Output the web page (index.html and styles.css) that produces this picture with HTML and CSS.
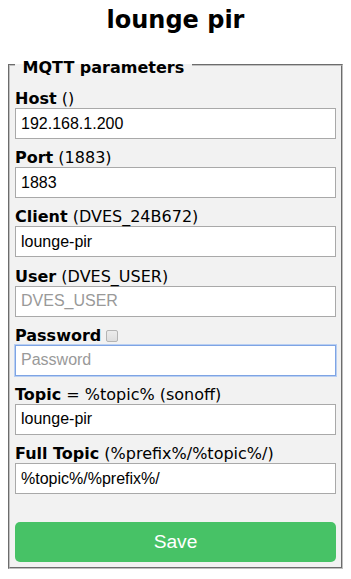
FILE: index.html
```html
<!DOCTYPE html>
<html lang="en">
<head>
    <meta charset="UTF-8">
    <meta name="viewport" content="width=device-width, initial-scale=1.0">
    <title>lounge pir - Configure MQTT</title>
    <link rel="stylesheet" href="styles.css">
</head>
<body>
    <div class="page">
        <h2 class="title">lounge pir</h2>

        <fieldset class="panel">
            <legend><b>&nbsp;MQTT parameters&nbsp;</b></legend>
            <form class="form" method="get" action="sv">
                <!-- Host -->
                <div class="field">
                    <div class="label"><b>Host</b> ()</div>
                    <input class="text" id="mh" name="mh" value="192.168.1.200">
                </div>

                <!-- Port -->
                <div class="field">
                    <div class="label"><b>Port</b> (1883)</div>
                    <input class="text" id="ml" name="ml" value="1883">
                </div>

                <!-- Client -->
                <div class="field">
                    <div class="label"><b>Client</b> (DVES_24B672)</div>
                    <input class="text" id="mc" name="mc" value="lounge-pir">
                </div>

                <!-- User -->
                <div class="field">
                    <div class="label"><b>User</b> (DVES_USER)</div>
                    <input class="text" id="mu" name="mu" placeholder="DVES_USER">
                </div>

                <!-- Password -->
                <div class="field">
                    <div class="label"><b>Password</b> <input type="checkbox" class="show-pw"></div>
                    <input class="text is-focus" id="mp" name="mp" type="password" placeholder="Password">
                </div>

                <!-- Topic -->
                <div class="field">
                    <div class="label"><b>Topic</b> = %topic% (sonoff)</div>
                    <input class="text" id="mt" name="mt" value="lounge-pir">
                </div>

                <!-- Full Topic -->
                <div class="field">
                    <div class="label"><b>Full Topic</b> (%prefix%/%topic%/)</div>
                    <input class="text" id="mf" name="mf" value="%topic%/%prefix%/">
                </div>

                <button type="submit" class="btn-save">Save</button>
            </form>
        </fieldset>
    </div>
</body>
</html>
```

FILE: styles.css
```css
body {
    margin: 0;
    background-color: #fff;
    color: #000;
    font-family: "DejaVu Sans", Verdana, sans-serif;
    font-size: 16px;
}
.page {
    padding: 0 8px;
}
.title {
    margin: 6px 0 0;
    font-size: 24px;
    line-height: 28px;
    text-align: center;
}
.panel {
    margin: 19.5px 0 0;
    padding: 5px;
    min-width: 0;
    border: 2px groove #c0c0c0;
    background-color: #f2f2f2;
}
.panel legend {
    padding: 4px 2px 0;
    line-height: 19px;
}
.form {
    padding-top: 7.5px;
}
.field + .field {
    margin-top: 9.2px;
}
.label {
    line-height: 19px;
}
.text {
    display: block;
    width: 100%;
    height: 31px;
    box-sizing: border-box;
    margin: 0;
    padding: 5px;
    border: 1px solid #a9a9a9;
    border-radius: 0;
    background-color: #fff;
    color: #000;
    font-family: "Liberation Sans", Arial, sans-serif;
    font-size: 16px;
    line-height: 19px;
    outline: none;
}
.text::placeholder {
    color: #999;
}
.text.is-focus {
    border-color: #7ea4e4;
    box-shadow: 0 0 0 1px #b9cff2;
}
.show-pw {
    -webkit-appearance: none;
    appearance: none;
    width: 12px;
    height: 12px;
    margin: 0;
    vertical-align: -1px;
    border: 1px solid #b4b4b4;
    border-radius: 2px;
    background: linear-gradient(#ececec, #dedede);
}
.btn-save {
    display: block;
    width: 100%;
    height: 40px;
    margin-top: 28px;
    padding: 0;
    border: 0;
    border-radius: 5px;
    background-color: #47c266;
    color: #fff;
    font-family: "Liberation Sans", Arial, sans-serif;
    font-size: 19.2px;
    cursor: pointer;
}
```
